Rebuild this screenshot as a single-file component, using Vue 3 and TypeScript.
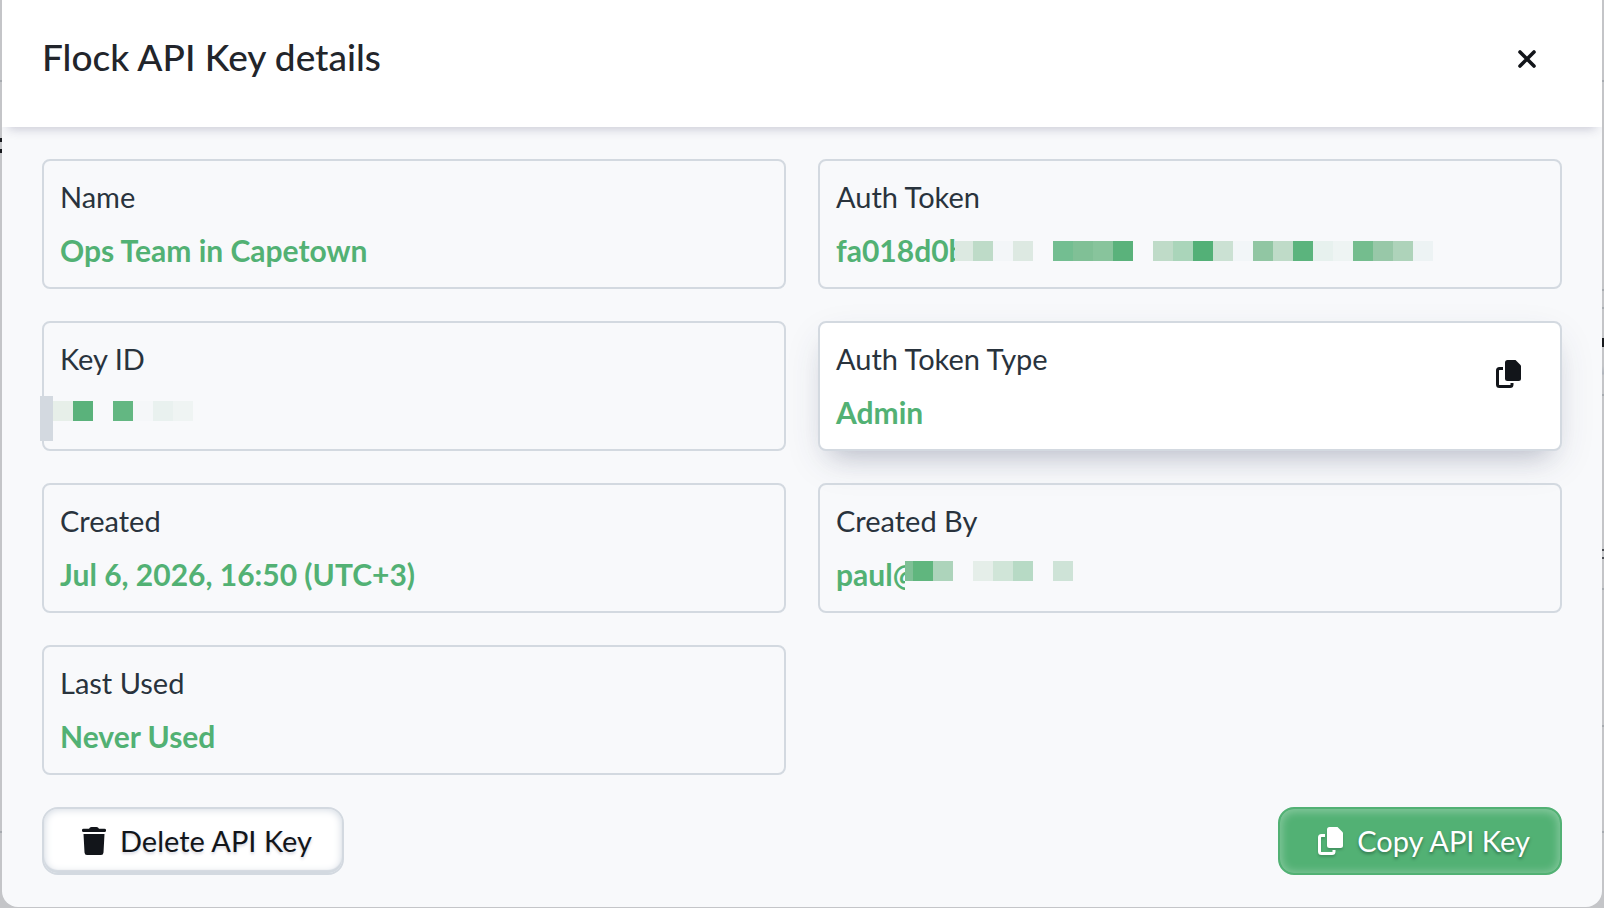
<script setup lang="ts">
interface Mask { text: string; cls: string; blocks: [number, string][] }
interface Field { label: string; value?: string; mask?: Mask; active?: boolean }

const cells = (colors: string[]): [number, string][] => colors.map((c) => [20, c])
const none = 'transparent'

const fields: Field[] = [
  { label: 'Name', value: 'Ops Team in Capetown' },
  {
    label: 'Auth Token',
    mask: {
      text: 'fa018d0b',
      cls: 'token',
      blocks: [
        [18, '#dce9e1'],
        ...cells([
          '#bedbc8', '#f3f6f8', '#dde9e2', none, '#73be91', '#80c096', '#88c49c', '#5ab27b', none,
          '#bfdbc8', '#aad5ba', '#53b077', '#cbe1d3', '#f2f6f8', '#91c6a3', '#bfdbc8', '#5bb47d',
          '#e7f1ee', '#eef4f3', '#74bd8e', '#98c8a8', '#aed3ba', '#edf3f4',
        ]),
      ],
    },
  },
  {
    label: 'Key ID',
    mask: {
      text: '',
      cls: 'key-id',
      blocks: cells(['#e7efe9', '#5ab27b', none, '#63b782', '#f5f7f9', '#e9f1ef', '#eff4f3']),
    },
  },
  { label: 'Auth Token Type', value: 'Admin', active: true },
  { label: 'Created', value: 'Jul 6, 2026, 16:50 (UTC+3)' },
  {
    label: 'Created By',
    mask: {
      text: 'paul@',
      cls: 'email',
      blocks: [
        [8, '#7fc096'],
        ...cells(['#60b67e', '#add4bb', none, '#e5eee9', '#d0e5d8', '#b7dac5', none, '#cee3d7']),
      ],
    },
  },
  { label: 'Last Used', value: 'Never Used' },
]
</script>

<template>
  <div class="backdrop">
    <section class="modal" role="dialog" aria-labelledby="modal-title">
      <header class="head">
        <h1 id="modal-title">Flock API Key details</h1>
        <button class="close" type="button" aria-label="Close">
          <svg width="18" height="18" viewBox="0 0 18 18">
            <path d="M2 2 L16 16 M16 2 L2 16" fill="none" stroke="#12151a" stroke-width="3.6" stroke-linecap="round" />
          </svg>
        </button>
      </header>

      <div class="body">
        <dl class="grid">
          <div v-for="f in fields" :key="f.label" class="card" :class="{ active: f.active }">
            <div class="info">
              <dt>{{ f.label }}</dt>
              <dd v-if="f.mask" class="masked" :class="f.mask.cls">
                <span class="shown">{{ f.mask.text }}</span>
                <span
                  v-for="(b, i) in f.mask.blocks"
                  :key="i"
                  class="block"
                  :style="{ width: b[0] + 'px', background: b[1] }"
                ></span>
              </dd>
              <dd v-else>{{ f.value }}</dd>
            </div>
            <button v-if="f.active" class="copy" type="button" aria-label="Copy">
              <svg width="25" height="28" viewBox="0 0 25 28">
                <path d="M11.500 0H19.500L25 5.500V18.500Q25 21 22.500 21H11.500Q9 21 9 18.500V2.500Q9 0 11.500 0Z" fill="#12151a" />
                <path d="M7 8.500H3.500Q1.500 8.500 1.500 10.500V24.500Q1.500 26.500 3.500 26.500H14Q16 26.500 16 24.500V23" fill="none" stroke="#12151a" stroke-width="3" />
              </svg>
            </button>
          </div>
        </dl>

        <footer class="actions">
          <button class="btn delete" type="button">
            <svg width="24" height="28" viewBox="0 0 24 28">
              <path d="M1.500 1.700H7L8 .500Q8.500 0 9.500 0H14.500Q15.500 0 16 .500L17 1.700H22.500Q24 1.700 24 3V3.700Q24 5 22.500 5H1.500Q0 5 0 3.700V3Q0 1.700 1.500 1.700ZM1.500 7H22.500L21.500 25.500Q21.300 28 19 28H5Q2.700 28 2.500 25.500Z" fill="#12151a" />
            </svg>
            <span>Delete API Key</span>
          </button>
          <button class="btn primary" type="button">
            <svg width="25" height="28" viewBox="0 0 25 28">
              <path d="M11.500 0H19.500L25 5.500V18.500Q25 21 22.500 21H11.500Q9 21 9 18.500V2.500Q9 0 11.500 0Z" fill="#fff" />
              <path d="M7 8.500H3.500Q1.500 8.500 1.500 10.500V24.500Q1.500 26.500 3.500 26.500H14Q16 26.500 16 24.500V23" fill="none" stroke="#fff" stroke-width="3" />
            </svg>
            <span>Copy API Key</span>
          </button>
        </footer>
      </div>
    </section>
  </div>
</template>

<style>
body {
  background: #c4c5c8;
}
</style>

<style scoped>
/* The dimmed page shows as a 2px strip on both sides of the dialog. */
.backdrop {
  --page: #c4c5c8;
  --rule: #a7abb0;
  --ink: #17191d;
  padding: 0 2px 1px;
  background:
    linear-gradient(
      var(--page) 80px, var(--rule) 80px 82px, var(--page) 82px 138px,
      var(--ink) 138px 142px, var(--page) 142px 149px, var(--ink) 149px 153px,
      var(--page) 153px 831px, var(--rule) 831px 833px, var(--page) 833px
    ) left / 2px 100% no-repeat,
    linear-gradient(
      var(--page) 80px, var(--rule) 80px 82px, var(--page) 82px 289px,
      var(--rule) 289px 291px, var(--page) 291px 307px, var(--rule) 307px 309px,
      var(--page) 309px 338px, var(--ink) 338px 347px, var(--page) 347px 366px,
      #b0b5bd 374px, var(--page) 375px 394px, var(--rule) 394px 396px,
      var(--page) 396px 549px, #4b4e54 549px 551px, var(--page) 551px 557px,
      #4b4e54 557px 559px, var(--page) 559px 588px, var(--rule) 588px 590px,
      var(--page) 590px 725px, var(--rule) 725px 727px, var(--page) 727px 831px,
      var(--rule) 831px 833px, var(--page) 833px
    ) right / 2px 100% no-repeat,
    var(--page);
  font-family: Lato, "Open Sans", sans-serif;
}
.modal {
  background: #f8f9fb;
  border-radius: 0 0 16px 16px;
  overflow: hidden;
}
.head {
  display: flex;
  align-items: flex-start;
  justify-content: space-between;
  box-sizing: border-box;
  height: 127px;
  padding: 34px 51px 0 40px;
  background: #fff;
  box-shadow: 0 8px 10px -6px rgba(50, 50, 93, 0.24);
}
h1 {
  margin: 0;
  font-size: 37px;
  line-height: 46px;
  font-weight: 500;
  color: #22252b;
}
button {
  font-family: inherit;
  cursor: pointer;
}
.close,
.copy {
  display: flex;
  align-items: center;
  justify-content: center;
  padding: 0;
  border: 0;
  background: none;
}
.close {
  width: 48px;
  height: 50px;
}
.body {
  padding: 32px 40px;
}
.grid {
  display: grid;
  grid-template-columns: 1fr 1fr;
  gap: 32px;
  margin: 0;
}
.card {
  display: flex;
  justify-content: space-between;
  padding: 11px 16px;
  border: 2px solid #d3d9e0;
  border-radius: 8px;
}
.card.active {
  background: #fff;
  box-shadow: 0 14px 40px -6px rgba(50, 60, 93, 0.14), 0 16px 24px -14px rgba(50, 60, 93, 0.24);
}
dt,
dd {
  margin: 0;
}
dt {
  margin-bottom: 2px;
  font-size: 29px;
  line-height: 50px;
  color: #29333d;
}
dd {
  font-size: 30px;
  line-height: 52px;
  font-weight: 700;
  color: #52b174;
}
.masked {
  display: flex;
  align-items: center;
  height: 52px;
}
.shown {
  flex: none;
  overflow: hidden;
  white-space: nowrap;
}
.block {
  flex: none;
  height: 20px;
}
.token .shown {
  width: 119px;
}
.token .block {
  margin-top: 2px;
}
.email .shown {
  width: 69px;
}
.email .block {
  margin-bottom: 6px;
}
.key-id {
  margin-left: -20px;
}
.key-id .shown {
  width: 13px;
  height: 45px;
  margin-top: 12px;
  background: #d3d9e0;
}
.key-id .block {
  margin-bottom: 2px;
}
.copy {
  width: 72px;
  height: 80px;
}
.actions {
  display: flex;
  justify-content: space-between;
  margin-top: 32px;
}
.btn {
  display: flex;
  align-items: center;
  justify-content: center;
  gap: 14px;
  height: 68px;
  padding: 0 30px 0 38px;
  border: 2px solid #d3d9e0;
  border-radius: 16px;
  font-size: 29px;
  line-height: 40px;
}
.btn svg {
  flex: none;
}
.delete {
  background: #fff;
  color: #12151a;
  box-shadow: inset 0 -3px 1px #d3d9e0, inset 0 0 8px #ccd4de;
  text-shadow: 0 2px 3px rgba(50, 50, 93, 0.2);
}
.primary {
  min-width: 284px;
  border-color: #52b174;
  background: #52b174;
  color: #fff;
  box-shadow: inset 0 1px 8px 2px rgba(255, 255, 255, 0.3);
  text-shadow: 0 2px 3px rgba(20, 60, 40, 0.5);
}
.primary svg {
  filter: drop-shadow(0 2px 1px rgba(20, 60, 40, 0.25));
}
</style>
